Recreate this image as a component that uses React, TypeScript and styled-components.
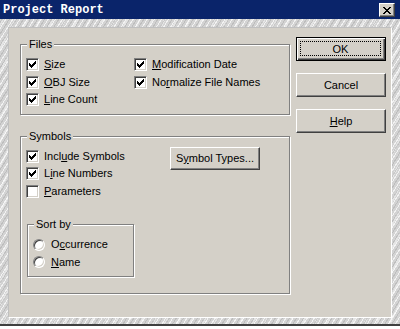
import React from "react";
import styled, { createGlobalStyle, css } from "styled-components";

const Global = createGlobalStyle`
  html, body { margin: 0; padding: 0; }
  body {
    width: 400px; height: 329px; overflow: hidden;
    font-family: "Liberation Sans", Arial, sans-serif; font-size: 11px; color: #000;
  }
`;

const Window = styled.div`
  width: 400px; height: 329px; display: flex; flex-direction: column;
  background-color: #d3d3d3;
  background-image:
    repeating-linear-gradient(-58deg, rgba(255,255,255,0.7) 0 1px, transparent 1px 3px, rgba(150,150,150,0.35) 3px 4px, transparent 4px 6px),
    repeating-linear-gradient(-62deg, rgba(255,255,255,0.4) 0 2px, transparent 2px 11px);
`;

const TitleBar = styled.div`
  height: 19px; flex: none; box-sizing: border-box; background: #0a246a;
  display: flex; align-items: center; justify-content: space-between; padding: 0 5px 0 3px;
`;

const Title = styled.span`
  font-family: "Liberation Mono", "DejaVu Sans Mono", monospace; font-weight: bold;
  font-size: 12px; color: #fff; line-height: 19px; padding-top: 1px;
`;

const CloseButton = styled.button`
  width: 16px; height: 14px; margin-top: 1px; padding: 0; box-sizing: border-box;
  background: #d4d0c8; border: 1px solid; border-color: #fff #404040 #404040 #fff;
  box-shadow: inset -1px -1px 0 #808080;
  display: flex; align-items: center; justify-content: center;
`;

const Frame = styled.div`
  flex: 1; padding: 8px 8px 6px; display: flex;
`;

const Panel = styled.div`
  flex: 1; box-sizing: border-box; height: 291px; background: #d4d0c8;
  border: 1px solid; border-color: #c0c0c0 #fff #fff #c0c0c0;
  display: flex; gap: 6px; padding: 9px 5px 0 11px;
`;

const BottomEdge = styled.div`
  height: 3px; flex: none; border-top: 2px solid #404040; background: #fff;
`;

const LeftColumn = styled.div`
  width: 270px; display: flex; flex-direction: column; gap: 15px; padding-top: 1px;
`;

const Group = styled.fieldset<{ $height?: number; $width?: number }>`
  margin: 0; box-sizing: border-box; min-width: 0;
  border: 1px solid #808080; box-shadow: inset 1px 1px 0 #fff, 1px 1px 0 #fff;
  padding: 5px 5px 5px 5px;
  ${(p) => p.$height && css`height: ${p.$height}px;`}
  ${(p) => p.$width && css`width: ${p.$width}px;`}
`;

const Legend = styled.legend`
  padding: 0 2px; margin-left: 1px; line-height: 13px; background: #d4d0c8;
`;

const FilesGrid = styled.div`
  display: grid; grid-template-columns: 108px auto;
`;

const Column = styled.div`
  display: flex; flex-direction: column;
`;

const Row = styled.label<{ $gap?: number }>`
  height: 17.5px; display: flex; align-items: center; gap: ${(p) => p.$gap ?? 5}px;
  white-space: nowrap; line-height: 13px;
`;

const Box = styled.span`
  width: 13px; height: 13px; box-sizing: border-box; flex: none; background: #fff;
  border: 1px solid; border-color: #808080 #fff #fff #808080;
  box-shadow: inset 1px 1px 0 #404040, inset -1px -1px 0 #d4d0c8;
  display: flex; align-items: center; justify-content: center;
`;

const RadioDot = styled.span`
  width: 12px; height: 12px; border-radius: 50%; box-sizing: border-box; flex: none; background: #fff;
  border: 1px solid; border-color: #808080 #fff #fff #808080;
  box-shadow: inset 1px 1px 0 #404040, inset -1px -1px 0 #d4d0c8;
`;

const Key = styled.span`
  text-decoration: underline; text-underline-offset: 1px;
`;

const SymbolsTop = styled.div`
  display: flex; align-items: flex-start;
`;

const SymbolsList = styled.div`
  width: 144px; display: flex; flex-direction: column;
`;

const SortWrap = styled.div`
  margin: 18px 0 0 1px;
`;

const ButtonColumn = styled.div`
  display: flex; flex-direction: column; gap: 12px; width: 90px;
`;

const Button = styled.button<{ $default?: boolean; $h?: number }>`
  width: 90px; height: ${(p) => p.$h ?? 24}px; box-sizing: border-box; padding: 0; margin: 0;
  font-family: "Liberation Sans", Arial, sans-serif; font-size: 11px; color: #000;
  background: #d4d0c8; border: 1px solid; border-color: #fff #404040 #404040 #fff;
  box-shadow: inset -1px -1px 0 #808080, inset 1px 1px 0 #d4d0c8;
  display: flex; align-items: center; justify-content: center;
  ${(p) =>
    p.$default &&
    css`
      border-color: #000;
      box-shadow: inset 1px 1px 0 #fff, inset -1px -1px 0 #404040, inset -2px -2px 0 #808080;
      padding: 3px 4px 4px 3px;
      align-items: stretch; justify-content: stretch;
    `}
`;

const FocusRing = styled.span`
  flex: 1; border: 1px dotted #000; display: flex; align-items: center; justify-content: center;
`;

const Check: React.FC = () => (
  <svg width="7" height="7" viewBox="0 0 7 7" shapeRendering="crispEdges">
    {[2, 3, 4, 3, 2, 1, 0].map((y, x) => (
      <rect key={x} x={x} y={y} width="1" height="3" fill="#000" />
    ))}
  </svg>
);

const CheckItem: React.FC<{ checked?: boolean; children: React.ReactNode }> = ({ checked, children }) => (
  <Row>
    <Box>{checked && <Check />}</Box>
    <span>{children}</span>
  </Row>
);

const RadioItem: React.FC<{ children: React.ReactNode }> = ({ children }) => (
  <Row $gap={6}>
    <RadioDot />
    <span>{children}</span>
  </Row>
);

export default function App() {
  return (
    <>
      <Global />
      <Window>
        <TitleBar>
          <Title>Project Report</Title>
          <CloseButton aria-label="Close">
            <svg width="8" height="7" viewBox="0 0 8 7" shapeRendering="crispEdges">
              <path d="M0 0h2v1h-2zM6 0h2v1h-2zM1 1h2v1h-2zM5 1h2v1h-2zM2 2h4v1h-4zM3 3h2v1h-2zM2 4h4v1h-4zM1 5h2v1h-2zM5 5h2v1h-2zM0 6h2v1h-2zM6 6h2v1h-2z" fill="#000" />
            </svg>
          </CloseButton>
        </TitleBar>
        <Frame>
          <Panel>
            <LeftColumn>
              <Group>
                <Legend>Files</Legend>
                <FilesGrid>
                  <Column>
                    <CheckItem checked><Key>S</Key>ize</CheckItem>
                    <CheckItem checked><Key>O</Key>BJ Size</CheckItem>
                    <CheckItem checked><Key>L</Key>ine Count</CheckItem>
                  </Column>
                  <Column>
                    <CheckItem checked><Key>M</Key>odification Date</CheckItem>
                    <CheckItem checked>No<Key>r</Key>malize File Names</CheckItem>
                  </Column>
                </FilesGrid>
              </Group>
              <Group $height={164}>
                <Legend>Symbols</Legend>
                <SymbolsTop>
                  <SymbolsList>
                    <CheckItem checked>Incl<Key>u</Key>de Symbols</CheckItem>
                    <CheckItem checked>L<Key>i</Key>ne Numbers</CheckItem>
                    <CheckItem><Key>P</Key>arameters</CheckItem>
                  </SymbolsList>
                  <Button $h={23} style={{ marginTop: -1 }}>
                    S<Key>y</Key>mbol Types...
                  </Button>
                </SymbolsTop>
                <SortWrap>
                  <Group $width={107}>
                    <Legend>Sort by</Legend>
                    <RadioItem>O<Key>c</Key>currence</RadioItem>
                    <RadioItem><Key>N</Key>ame</RadioItem>
                  </Group>
                </SortWrap>
              </Group>
            </LeftColumn>
            <ButtonColumn>
              <Button $default>
                <FocusRing>OK</FocusRing>
              </Button>
              <Button>Cancel</Button>
              <Button>
                <span><Key>H</Key>elp</span>
              </Button>
            </ButtonColumn>
          </Panel>
        </Frame>
        <BottomEdge />
      </Window>
    </>
  );
}
